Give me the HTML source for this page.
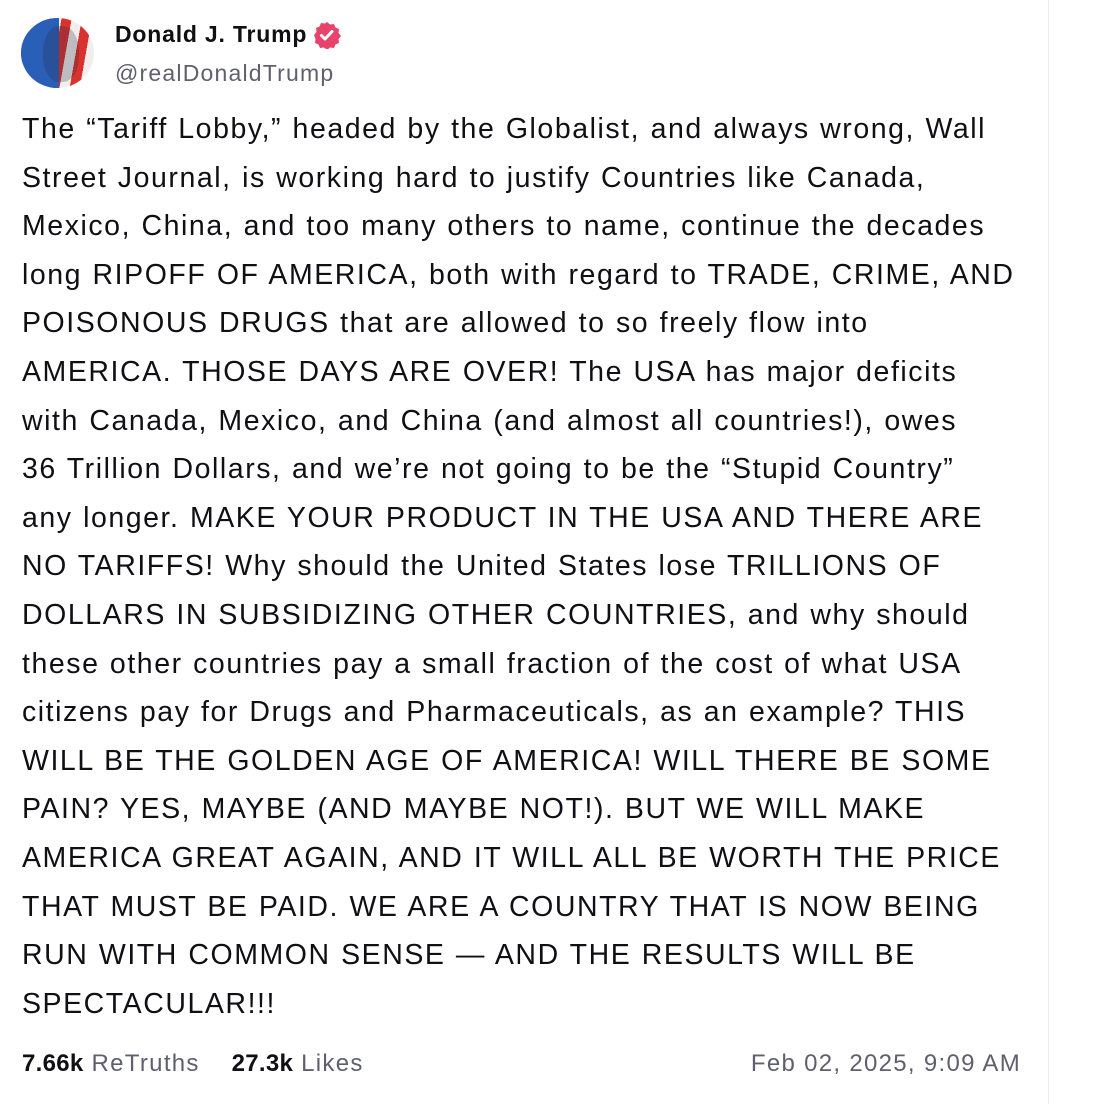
<!DOCTYPE html>
<html><head><meta charset="utf-8"><style>
html,body{margin:0;padding:0;background:#fff;width:1100px;height:1104px;overflow:hidden;font-family:"Liberation Sans",sans-serif;color:#0f0f14}
.vl{position:absolute;left:1048px;top:0;width:1px;height:1104px;background:#ececf0}
.av{position:absolute;left:21px;top:18px;width:73px;height:70px;border-radius:50%;overflow:hidden;background:repeating-linear-gradient(100deg,#d8332e 0 10px,#f2eeee 10px 20px)}
.av:before{content:"";position:absolute;left:0;top:0;width:38px;height:70px;background:#2a5fb8}
.av:after{content:"";position:absolute;left:22px;top:8px;width:36px;height:56px;border-radius:45%;background:rgba(40,40,60,0.25)}
.name{position:absolute;left:115px;top:21px;font-size:23px;font-weight:bold;letter-spacing:0.8px}
.badge{position:absolute;left:313px;top:21px}
.handle{position:absolute;left:115px;top:60px;font-size:23px;color:#5f5f6e;letter-spacing:1.2px}
.body{position:absolute;left:22px;top:105px;font-size:28.5px;line-height:48.6px;letter-spacing:1.55px;word-spacing:1px;white-space:nowrap}
.foot{position:absolute;top:1050px;font-size:24px;color:#5f5f6e;letter-spacing:1.3px}
.foot b{color:#0f0f14;letter-spacing:0.3px}
</style></head><body>
<div class="vl"></div>
<div class="av"></div>
<div class="name">Donald J. Trump</div>
<svg class="badge" width="28" height="28" viewBox="0 0 28 28"><path d="M14 1l3 2.5 4-.5 1.5 3.5 3.5 1.5-.5 4 2.5 3-2.5 3 .5 4-3.5 1.5-1.5 3.5-4-.5-3 2.5-3-2.5-4 .5-1.5-3.5-3.5-1.5.5-4L1 14l2.5-3-.5-4 3.5-1.5L8 2l4 .5z" fill="#e8436b"/><path d="M8.5 14.5l3.5 3.5 7-7.5" stroke="#fff" stroke-width="3" fill="none" stroke-linecap="round" stroke-linejoin="round"/></svg>
<div class="handle">@realDonaldTrump</div>
<div class="body">The “Tariff Lobby,” headed by the Globalist, and always wrong, Wall<br>Street Journal, is working hard to justify Countries like Canada,<br>Mexico, China, and too many others to name, continue the decades<br>long RIPOFF OF AMERICA, both with regard to TRADE, CRIME, AND<br>POISONOUS DRUGS that are allowed to so freely flow into<br>AMERICA. THOSE DAYS ARE OVER! The USA has major deficits<br>with Canada, Mexico, and China (and almost all countries!), owes<br>36 Trillion Dollars, and we’re not going to be the “Stupid Country”<br>any longer. MAKE YOUR PRODUCT IN THE USA AND THERE ARE<br>NO TARIFFS! Why should the United States lose TRILLIONS OF<br>DOLLARS IN SUBSIDIZING OTHER COUNTRIES, and why should<br>these other countries pay a small fraction of the cost of what USA<br>citizens pay for Drugs and Pharmaceuticals, as an example? THIS<br>WILL BE THE GOLDEN AGE OF AMERICA! WILL THERE BE SOME<br>PAIN? YES, MAYBE (AND MAYBE NOT!). BUT WE WILL MAKE<br>AMERICA GREAT AGAIN, AND IT WILL ALL BE WORTH THE PRICE<br>THAT MUST BE PAID. WE ARE A COUNTRY THAT IS NOW BEING<br>RUN WITH COMMON SENSE — AND THE RESULTS WILL BE<br>SPECTACULAR!!!</div>
<div class="foot" style="left:22px"><b>7.66k</b> ReTruths &nbsp;&nbsp;&nbsp;<b>27.3k</b> Likes</div>
<div class="foot" style="right:79px">Feb 02, 2025, 9:09 AM</div>
</body></html>
